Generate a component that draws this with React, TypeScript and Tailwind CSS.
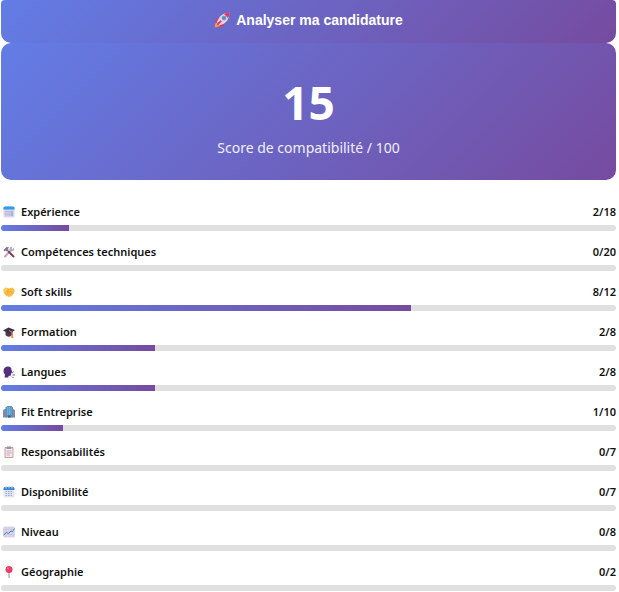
import type { ReactNode } from 'react'

const Icon = ({ children, className = 'size-3' }: { children: ReactNode; className?: string }) => (
  <svg viewBox="0 0 24 24" className={`${className} shrink-0`} fill="none" aria-hidden="true">
    {children}
  </svg>
)

const Rocket = () => (
  <Icon className="size-4">
    <path d="M10 7 4 10l-3 5 6-1zM17 14l-3 7-5 2 1-7z" fill="#e8365d" />
    <path d="M5 16c-3 0-4 3-4 7 4 0 7-1 8-4z" fill="#f79a3b" />
    <path d="M5 14C8 6 14 1 23 1c0 9-4 15-12 18l-3 1-3-3z" fill="#dcd6e8" />
    <path d="M15 3c3-2 6-2 8-2 0 2 0 5-2 8z" fill="#f0325e" />
    <path d="m6 18 4-4" stroke="#f0325e" strokeWidth="3" strokeLinecap="round" />
    <circle cx="15" cy="9" r="3" fill="#4594d6" stroke="#8b84a3" />
  </Icon>
)

const Calendar = () => (
  <Icon>
    <rect x="1" y="1" width="22" height="22" rx="3" fill="#dcd3ec" />
    <path d="M1 7V4a3 3 0 0 1 3-3h16a3 3 0 0 1 3 3v3z" fill="#2b9bf0" />
    <path d="M6 10v10M10 10v10M14 10v10" stroke="#a99fc6" strokeWidth="2" strokeDasharray="2 1" />
    <path d="M18 10v10" stroke="#4aa5ee" strokeWidth="2" />
  </Icon>
)

const DatePad = () => (
  <Icon>
    <rect x="1" y="3" width="22" height="20" rx="3" fill="#e4e3f2" />
    <path d="M1 8V5a3 3 0 0 1 3-3h16a3 3 0 0 1 3 3v3z" fill="#3c86d8" />
    <path d="M6 0v5M12 0v5M18 0v5" stroke="#b8cbe6" strokeWidth="2" />
    <path d="M5 11h14M5 15h14M5 19h14" stroke="#8eafd8" strokeWidth="2" strokeDasharray="3 2" />
  </Icon>
)

const Tools = () => (
  <Icon>
    <path d="m4 21 13-14" stroke="#b5a9bc" strokeWidth="4" strokeLinecap="round" />
    <path d="M22 3c2 5-2 9-7 7l-2-3c0-4 3-6 6-6l-2 4 2 2z" fill="#b5a9bc" />
    <path d="m8 8 4 4" stroke="#8a6377" strokeWidth="3" />
    <path d="m12 12 9 9" stroke="#8a3c50" strokeWidth="4" strokeLinecap="round" />
    <path d="M1 8 7 2l6 1-3 2 1 3-4 3-2-2-2 2z" fill="#86778f" />
  </Icon>
)

const Handshake = () => (
  <Icon>
    <path d="m1 7 5-4 6 2 6-2 5 4c1 6-2 10-6 13l-5 2-5-2C3 17 0 12 1 7z" fill="#fcbc42" />
    <path d="m12 6-4 5c2 2 4 1 6-1l6 6" stroke="#e3923a" strokeWidth="1" />
    <path d="m5 15 3 3m0-5 4 4" stroke="#e99631" strokeWidth="1" />
    <path d="m1 7 5-4 3 2-6 7z" fill="#ffcf59" />
  </Icon>
)

const Cap = () => (
  <Icon>
    <path d="M5 11v7c4 5 10 4 14 0v-7z" fill="#4c3a55" />
    <path d="m0 9 11-6 13 5-11 8z" fill="#3d304b" />
    <path d="m12 9 6 3v7" stroke="#dc8242" strokeWidth="2" />
    <path d="m16 18 4-1 1 7h-4z" fill="#ec9648" />
  </Icon>
)

const Speaking = () => (
  <Icon>
    <path d="M1 10C1 4 5 1 10 1c5 0 7 3 7 7l2 5-3 1v5l-5 1v3H3l1-6c-2-2-3-4-3-7z" fill="#53307f" />
    <path d="m18 15 3-4M19 18h5M18 21l3 3" stroke="#7b5ba8" strokeWidth="2" />
  </Icon>
)

const Building = () => (
  <Icon>
    <path d="M0 8l6-3v18H0zM24 8l-6-3v18h6z" fill="#8c87a6" />
    <path d="M5 3 9 0h8l3 3v20H5z" fill="#5690bb" />
    <path d="M8 4h9M8 8h9M8 12h9M8 16h9" stroke="#84d2f0" strokeWidth="2" strokeDasharray="3 1" />
    <path d="M10 19h5v4h-5z" fill="#405c85" />
  </Icon>
)

const Clipboard = () => (
  <Icon>
    <rect x="3" y="2" width="18" height="22" rx="2" fill="#d59c88" />
    <path d="M5 5h14v17H5z" fill="#f1e8f5" />
    <path d="M8 1h8v5H8z" fill="#9d91a9" />
    <path d="M7 10h10M7 14h10M7 18h7" stroke="#b9b0c5" strokeWidth="2" />
  </Icon>
)

const Chart = () => (
  <Icon>
    <rect x="0" y="1" width="24" height="22" rx="3" fill="#ded4e8" />
    <path d="M1 7h22M1 12h22M1 17h22M6 2v20M12 2v20M18 2v20" stroke="#cbc0d8" />
    <path d="m1 18 6-5 4 2 5-5 3 1 4-6" stroke="#288bd5" strokeWidth="2" />
  </Icon>
)

const Pin = () => (
  <Icon>
    <path d="M12 12v11" stroke="#92899f" strokeWidth="2" strokeLinecap="round" />
    <circle cx="12" cy="7" r="7" fill="#ed3b66" />
    <circle cx="10" cy="5" r="2" fill="#ff7894" />
  </Icon>
)

const criteria = [
  { label: 'Expérience', score: 2, max: 18, icon: <Calendar /> },
  { label: 'Compétences techniques', score: 0, max: 20, icon: <Tools /> },
  { label: 'Soft skills', score: 8, max: 12, icon: <Handshake /> },
  { label: 'Formation', score: 2, max: 8, icon: <Cap /> },
  { label: 'Langues', score: 2, max: 8, icon: <Speaking /> },
  { label: 'Fit Entreprise', score: 1, max: 10, icon: <Building /> },
  { label: 'Responsabilités', score: 0, max: 7, icon: <Clipboard /> },
  { label: 'Disponibilité', score: 0, max: 7, icon: <DatePad /> },
  { label: 'Niveau', score: 0, max: 8, icon: <Chart /> },
  { label: 'Géographie', score: 0, max: 2, icon: <Pin /> },
]

const App = () => {
  return (
    <main className="bg-white pl-px pr-[3px] font-['Noto_Sans',sans-serif] text-[#111]">
      <button
        type="button"
        className="flex w-full items-center justify-center gap-[6px] rounded-t-sm rounded-b-[10px] bg-[linear-gradient(135deg,#627de6,#764b9f)] pt-2 pb-[11px] font-['Liberation_Sans',sans-serif] text-sm leading-6 font-bold text-white"
      >
        <Rocket />
        Analyser ma candidature
      </button>

      <section className="rounded-[10px] bg-[linear-gradient(135deg,#627de6,#764b9f)] pt-[26px] pb-5 text-center text-white">
        <div className="text-[46px] leading-[66px] font-bold">15</div>
        <p className="text-sm leading-[25px] opacity-90">Score de compatibilité / 100</p>
      </section>

      <ul className="mt-[23px] flex flex-col gap-3">
        {criteria.map(({ label, score, max, icon }) => (
          <li key={label}>
            <div className="flex items-center justify-between text-[11px] leading-[18px] font-semibold">
              <span className="flex items-center gap-[6px] pl-[2px]">
                {icon}
                {label}
              </span>
              <span>
                {score}/{max}
              </span>
            </div>
            <div className="mt-1 h-[6px] overflow-hidden rounded-full bg-[#e0e0e0]">
              <div
                className="h-full bg-[linear-gradient(90deg,#627de6,#764b9f)]"
                style={{ width: `${(score / max) * 100}%` }}
              />
            </div>
          </li>
        ))}
      </ul>
    </main>
  )
}

export default App
